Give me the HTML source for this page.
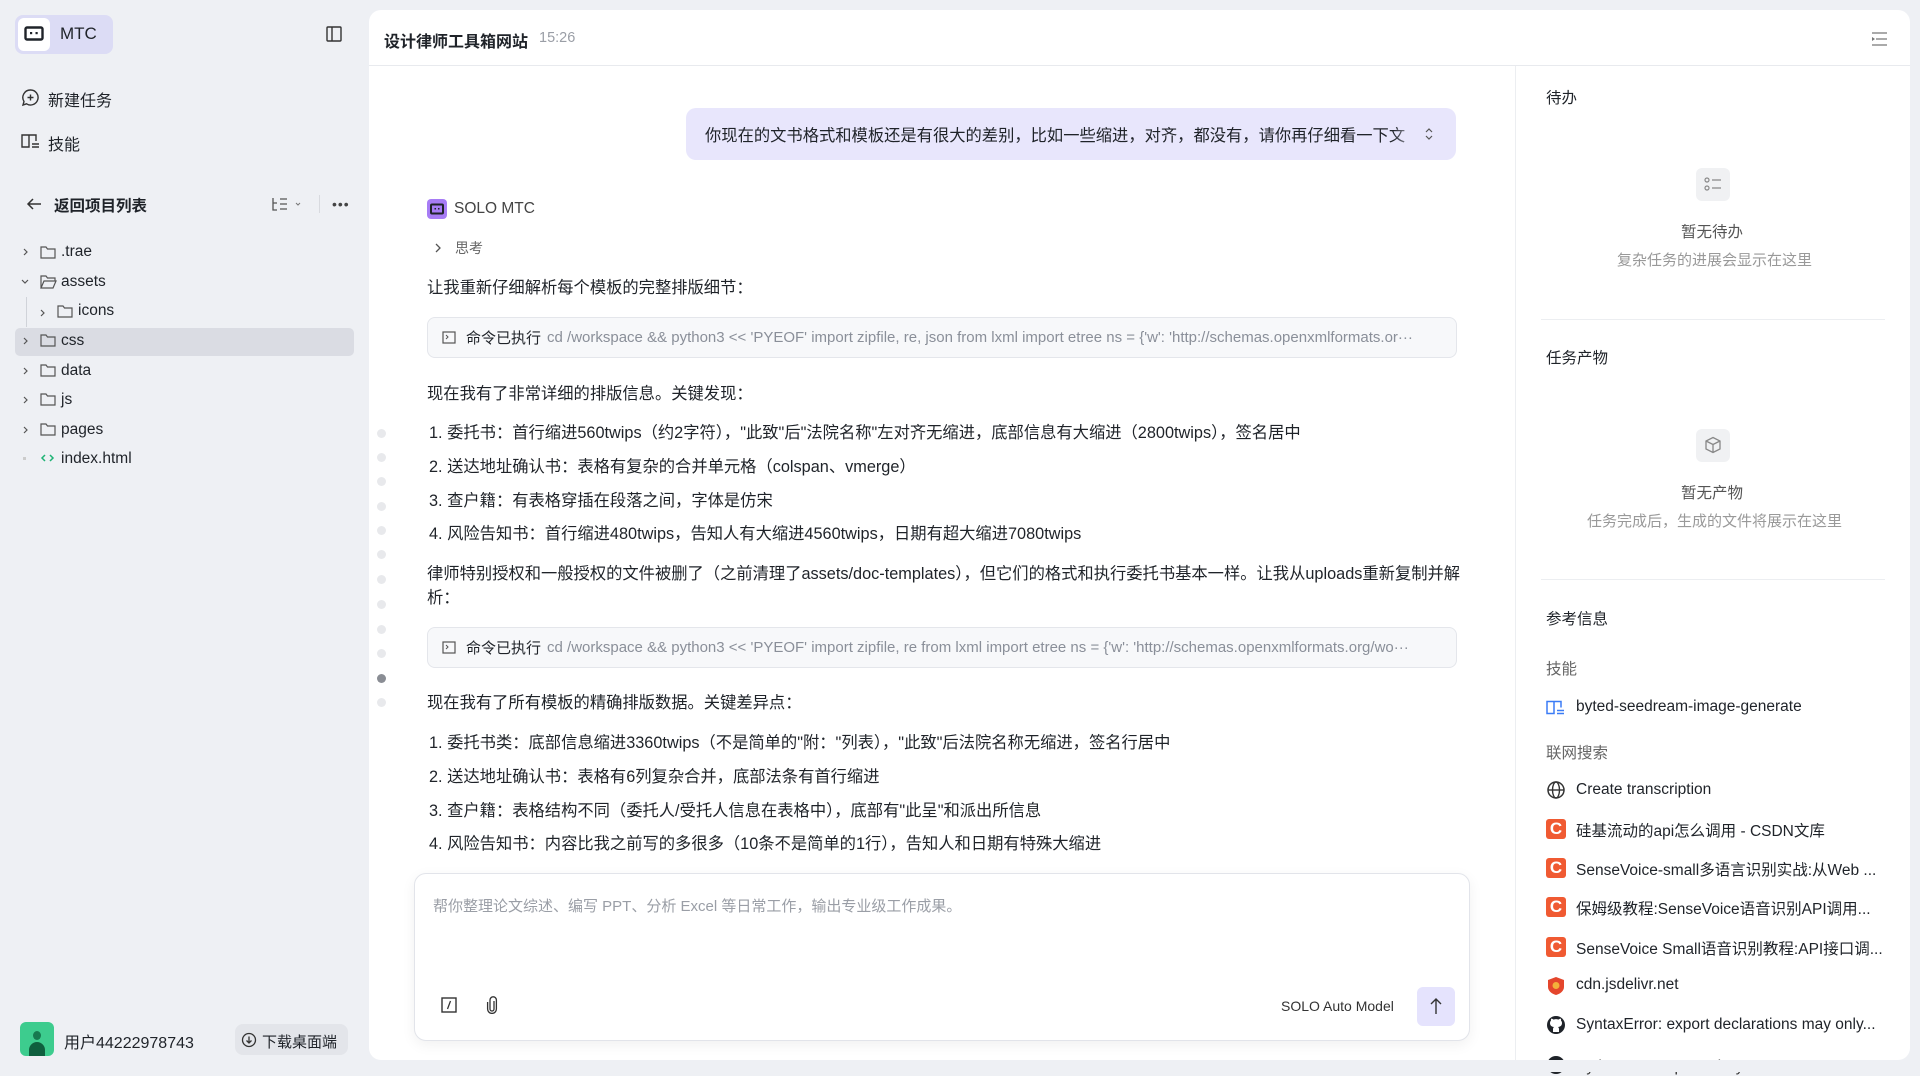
<!DOCTYPE html>
<html><head><meta charset="utf-8"><style>
*{margin:0;padding:0;box-sizing:border-box}
body{width:1920px;height:1072px;background:#eef0f4;font-family:"Liberation Sans","Noto Sans CJK SC",sans-serif;color:#1f2329;position:relative;overflow:hidden}
.a{position:absolute;white-space:nowrap}
.side{font-size:16px}
.main{position:absolute;left:369px;top:10px;width:1541px;height:1050px;background:#fff;border-radius:12px;overflow:hidden}
.t{font-size:16.3px;color:#1f2329}
.cmd{position:absolute;left:58px;width:1030px;height:41px;background:#f7f8fa;border:1px solid #e4e6eb;border-radius:8px;font-size:15px;display:flex;align-items:center;padding-left:14px;overflow:hidden;white-space:nowrap}
.cmd b{font-weight:normal;color:#1f2329;margin:0 6px 0 10px}
.cmd span{color:#8a8f99}
.dot{position:absolute;left:8px;width:9px;height:9px;border-radius:50%;background:#e8e9ec}
.rp .a{font-size:15.5px}
.ic{position:absolute;left:1546px;width:20px;height:20px}
.tl{position:absolute;font-size:15.5px;white-space:nowrap}
</style></head><body>
<!-- sidebar -->
<div class="a" style="left:15px;top:15px;width:98px;height:39px;background:#dcdcf5;border-radius:8px"></div>
<div class="a" style="left:18px;top:18px;width:32px;height:33px;background:#fff;border-radius:6px"></div>
<svg class="a" style="left:24px;top:26px" width="20" height="16" viewBox="0 0 20 16"><rect x="1.5" y="1.5" width="17" height="12" rx="1.5" fill="none" stroke="#1f2329" stroke-width="2.4"/><rect x="6" y="6" width="2.2" height="2.2" fill="#1f2329"/><rect x="11.5" y="6" width="2.2" height="2.2" fill="#1f2329"/></svg>
<div class="a" style="left:60px;top:24px;font-size:17px;font-weight:500">MTC</div>
<svg class="a" style="left:326px;top:26px" width="16" height="16" viewBox="0 0 16 16"><rect x="1" y="1" width="14" height="14" rx="1" fill="none" stroke="#333" stroke-width="1.4"/><line x1="6" y1="1" x2="6" y2="15" stroke="#333" stroke-width="1.4"/></svg>
<svg class="a" style="left:21px;top:88px" width="19" height="19" viewBox="0 0 19 19"><path d="M9.5 2a7.5 7.5 0 1 1-4 13.8L2 17l1-3.5A7.5 7.5 0 0 1 9.5 2z" fill="none" stroke="#333" stroke-width="1.4"/><path d="M9.5 6.5v6M6.5 9.5h6" stroke="#333" stroke-width="1.4"/></svg>
<div class="a side" style="left:48px;top:87px">新建任务</div>
<svg class="a" style="left:21px;top:133px" width="20" height="17" viewBox="0 0 20 17"><path d="M1 2h7v12H1zM8 2h7v6" fill="none" stroke="#333" stroke-width="1.4"/><path d="M11 11h7M11 14h7" stroke="#333" stroke-width="1.4"/></svg>
<div class="a side" style="left:48px;top:131px">技能</div>
<svg class="a" style="left:26px;top:197px" width="16" height="14" viewBox="0 0 16 14"><path d="M15 7H2M7 2L2 7l5 5" fill="none" stroke="#333" stroke-width="1.5"/></svg>
<div class="a" style="left:54px;top:194px;font-size:15.5px;font-weight:bold">返回项目列表</div>
<svg class="a" style="left:271px;top:196px" width="30" height="16" viewBox="0 0 30 16"><path d="M2 2v12h4M2 7h4M9 3h7M9 8h7M9 13h7" fill="none" stroke="#555" stroke-width="1.3"/><path d="M25 7l2 2 2-2" fill="none" stroke="#777" stroke-width="1"/></svg>
<div class="a" style="left:319px;top:195px;width:1px;height:18px;background:#d8dadf"></div>
<div class="a" style="left:332px;top:196px;font-size:14px;color:#444;letter-spacing:1px">•••</div>
<div class="a" style="left:15px;top:328px;width:339px;height:28px;background:#dadce3;border-radius:5px"></div>
<div class="a" style="left:26px;top:297px;width:1px;height:30px;background:#d0d3d9"></div>
<svg class="a" style="left:0;top:240px" width="150" height="235" viewBox="0 0 150 235">
<g fill="none" stroke="#555" stroke-width="1.2">
<path d="M24 9l3 3-3 3"/>
<path d="M22 40l3 3 3-3"/>
<path d="M41 70l3 3-3 3M24 98l3 3-3 3M24 128l3 3-3 3M24 157l3 3-3 3M24 187l3 3-3 3"/>
<path d="M41 7h5l1.5 2H55v9H41z"/>
<path d="M41 36h5l1.5 2H55v3H44l-3 7zM41 48l3-7h12l-3 7z"/>
<path d="M58 66h5l1.5 2H72v9H58z"/>
<path d="M41 95h5l1.5 2H55v9H41z"/>
<path d="M41 125h5l1.5 2H55v9H41z"/>
<path d="M41 154h5l1.5 2H55v9H41z"/>
<path d="M41 184h5l1.5 2H55v9H41z"/>
<path d="M45 215l-3 3 3 3M50 215l3 3-3 3" stroke="#1fb375" stroke-width="1.5"/>
</g><rect x="23" y="217" width="3" height="3" fill="#ccc"/></svg>
<div class="tl" style="left:61px;top:243px">.trae</div>
<div class="tl" style="left:61px;top:273px">assets</div>
<div class="tl" style="left:78px;top:302px">icons</div>
<div class="tl" style="left:61px;top:332px">css</div>
<div class="tl" style="left:61px;top:362px">data</div>
<div class="tl" style="left:61px;top:391px">js</div>
<div class="tl" style="left:61px;top:421px">pages</div>
<div class="tl" style="left:61px;top:450px">index.html</div>
<div class="a" style="left:20px;top:1022px;width:34px;height:34px;background:#3dcc8e;border-radius:6px;overflow:hidden"><div style="position:absolute;left:13px;top:9px;width:8px;height:9px;border-radius:50%;background:#177a50"></div><div style="position:absolute;left:9px;top:20px;width:16px;height:14px;border-radius:8px 8px 0 0;background:#0f5f3e"></div></div>
<div class="a" style="left:64px;top:1029px;font-size:16px">用户44222978743</div>
<div class="a" style="left:235px;top:1024px;width:113px;height:31px;background:#e3e5ea;border-radius:8px"></div>
<svg class="a" style="left:241px;top:1032px" width="16" height="16" viewBox="0 0 16 16"><circle cx="8" cy="8" r="6.5" fill="none" stroke="#333" stroke-width="1.3"/><path d="M8 4.5v6M5.5 8.5L8 11l2.5-2.5" fill="none" stroke="#333" stroke-width="1.3"/></svg>
<div class="a" style="left:262px;top:1031px;font-size:15px">下载桌面端</div>

<!-- main -->
<div class="main">
<div class="a" style="left:15px;top:18px;font-size:16px;font-weight:bold">设计律师工具箱网站</div>
<div class="a" style="left:170px;top:20px;font-size:14.5px;color:#9a9ea6">15:26</div>
<div class="a" style="left:0;top:55px;width:1541px;height:1px;background:#e8eaee"></div>
<svg class="a" style="left:1502px;top:22px" width="16" height="14" viewBox="0 0 16 14"><path d="M1 1h15M5 7h11M1 13h15" stroke="#777" stroke-width="1.3"/><path d="M1 5l3 2-3 2z" fill="#777"/></svg>
<div class="a" style="left:1146px;top:56px;width:1px;height:994px;background:#eceef1"></div>

<div class="dot" style="top:419px"></div><div class="dot" style="top:443px"></div><div class="dot" style="top:467px"></div><div class="dot" style="top:492px"></div><div class="dot" style="top:516px"></div><div class="dot" style="top:540px"></div><div class="dot" style="top:565px"></div><div class="dot" style="top:590px"></div><div class="dot" style="top:615px"></div><div class="dot" style="top:639px"></div><div class="dot" style="top:664px;background:#8a8d94"></div><div class="dot" style="top:688px"></div>

<div class="a" style="left:317px;top:98px;width:770px;height:52px;background:#e8e6fc;border-radius:10px;font-size:16.3px;padding:14px 0 0 19px;overflow:hidden">你现在的文书格式和模板还是有很大的差别，比如一些缩进，对齐，都没有，请你再仔细看一下文</div>
<div class="a" style="left:1024px;top:100px;width:28px;height:48px;background:linear-gradient(90deg,rgba(232,230,252,0),#e8e6fc)"></div>
<div class="a" style="left:1050px;top:100px;width:30px;height:48px;background:#e8e6fc"></div>
<svg class="a" style="left:1055px;top:116px" width="10" height="16" viewBox="0 0 10 16"><path d="M2 6l3-3 3 3M2 10l3 3 3-3" fill="none" stroke="#555" stroke-width="1.2"/></svg>

<div class="a" style="left:58px;top:189px;width:20px;height:20px;background:#a77cf5;border-radius:4px"></div>
<svg class="a" style="left:61px;top:193px" width="14" height="12" viewBox="0 0 14 12"><rect x="1" y="1.5" width="12" height="9" rx="1" fill="none" stroke="#1f2329" stroke-width="2"/><rect x="4.5" y="5" width="1.5" height="1.5" fill="#1f2329"/><rect x="8" y="5" width="1.5" height="1.5" fill="#1f2329"/></svg>
<div class="a" style="left:85px;top:190px;font-size:15.5px;color:#444">SOLO MTC</div>
<svg class="a" style="left:65px;top:232px" width="8" height="12" viewBox="0 0 8 12"><path d="M2 2l4 4-4 4" fill="none" stroke="#555" stroke-width="1.3"/></svg>
<div class="a" style="left:86px;top:228px;font-size:14px;color:#666">思考</div>
<div class="a t" style="left:58px;top:264px">让我重新仔细解析每个模板的完整排版细节：</div>
<div class="cmd" style="top:307px"><svg width="14" height="13" viewBox="0 0 14 13"><rect x="1" y="1" width="12" height="11" fill="none" stroke="#555" stroke-width="1.2"/><path d="M4 4l2 2-2 2" fill="none" stroke="#555" stroke-width="1"/></svg><b>命令已执行</b><span>cd /workspace &amp;&amp; python3 &lt;&lt; 'PYEOF' import zipfile, re, json from lxml import etree ns = {'w': 'http://schemas.openxmlformats.or···</span></div>
<div class="a t" style="left:58px;top:370px">现在我有了非常详细的排版信息。关键发现：</div>
<div class="a t" style="left:60px;top:409px">1. 委托书：首行缩进560twips（约2字符），"此致"后"法院名称"左对齐无缩进，底部信息有大缩进（2800twips），签名居中</div>
<div class="a t" style="left:60px;top:443px">2. 送达地址确认书：表格有复杂的合并单元格（colspan、vmerge）</div>
<div class="a t" style="left:60px;top:477px">3. 查户籍：有表格穿插在段落之间，字体是仿宋</div>
<div class="a t" style="left:60px;top:510px">4. 风险告知书：首行缩进480twips，告知人有大缩进4560twips，日期有超大缩进7080twips</div>
<div class="a t" style="left:58px;top:550px">律师特别授权和一般授权的文件被删了（之前清理了assets/doc-templates），但它们的格式和执行委托书基本一样。让我从uploads重新复制并解</div>
<div class="a t" style="left:58px;top:574px">析：</div>
<div class="cmd" style="top:617px"><svg width="14" height="13" viewBox="0 0 14 13"><rect x="1" y="1" width="12" height="11" fill="none" stroke="#555" stroke-width="1.2"/><path d="M4 4l2 2-2 2" fill="none" stroke="#555" stroke-width="1"/></svg><b>命令已执行</b><span>cd /workspace &amp;&amp; python3 &lt;&lt; 'PYEOF' import zipfile, re from lxml import etree ns = {'w': 'http://schemas.openxmlformats.org/wo···</span></div>
<div class="a t" style="left:58px;top:679px">现在我有了所有模板的精确排版数据。关键差异点：</div>
<div class="a t" style="left:60px;top:719px">1. 委托书类：底部信息缩进3360twips（不是简单的"附："列表），"此致"后法院名称无缩进，签名行居中</div>
<div class="a t" style="left:60px;top:753px">2. 送达地址确认书：表格有6列复杂合并，底部法条有首行缩进</div>
<div class="a t" style="left:60px;top:787px">3. 查户籍：表格结构不同（委托人/受托人信息在表格中），底部有"此呈"和派出所信息</div>
<div class="a t" style="left:60px;top:820px">4. 风险告知书：内容比我之前写的多很多（10条不是简单的1行），告知人和日期有特殊大缩进</div>

<div class="a" style="left:45px;top:863px;width:1056px;height:168px;background:#fff;border:1px solid #e2e4ea;border-radius:12px;box-shadow:0 4px 14px rgba(0,0,0,0.06)"></div>
<div class="a" style="left:64px;top:885px;font-size:15px;color:#9a9ea6">帮你整理论文综述、编写 PPT、分析 Excel 等日常工作，输出专业级工作成果。</div>
<svg class="a" style="left:72px;top:987px" width="16" height="16" viewBox="0 0 16 16"><rect x="1" y="1" width="14" height="14" fill="none" stroke="#333" stroke-width="1.4"/><path d="M9.5 4l-3 8" stroke="#333" stroke-width="1.3"/></svg>
<svg class="a" style="left:117px;top:986px" width="12" height="18" viewBox="0 0 12 18"><path d="M8 5v8a2 2 0 0 1-4 0V4a3.2 3.2 0 0 1 6.4 0v9a4.4 4.4 0 0 1-8.8 0V6" fill="none" stroke="#333" stroke-width="1.3"/></svg>
<div class="a" style="left:912px;top:988px;font-size:14px;color:#333">SOLO Auto Model</div>
<div class="a" style="left:1048px;top:977px;width:38px;height:39px;background:#e5e3fd;border-radius:6px"></div>
<svg class="a" style="left:1059px;top:987px" width="16" height="18" viewBox="0 0 16 18"><path d="M8 17V2M3 7l5-5 5 5" fill="none" stroke="#333" stroke-width="1.4"/></svg>
</div>

<!-- right panel -->
<div class="rp">
<div class="a" style="left:1546px;top:86px">待办</div>
<div class="a" style="left:1696px;top:168px;width:34px;height:33px;background:#f0f1f3;border-radius:6px"></div>
<svg class="a" style="left:1703px;top:176px" width="20" height="16" viewBox="0 0 20 16"><circle cx="4" cy="4" r="2" fill="none" stroke="#888" stroke-width="1.2"/><circle cx="4" cy="12" r="2" fill="none" stroke="#888" stroke-width="1.2"/><path d="M9 4h9M9 12h9" stroke="#888" stroke-width="1.2"/></svg>
<div class="a" style="left:1681px;top:220px;color:#555">暂无待办</div>
<div class="a" style="left:1617px;top:249px;color:#999;font-size:15px">复杂任务的进展会显示在这里</div>
<div class="a" style="left:1541px;top:319px;width:344px;height:1px;background:#eceef1"></div>
<div class="a" style="left:1546px;top:346px">任务产物</div>
<div class="a" style="left:1696px;top:429px;width:34px;height:33px;background:#f0f1f3;border-radius:6px"></div>
<svg class="a" style="left:1704px;top:436px" width="18" height="18" viewBox="0 0 18 18"><path d="M9 1.5l7 3.5v8l-7 3.5-7-3.5V5zM2 5l7 3.5 7-3.5M9 8.5v8" fill="none" stroke="#888" stroke-width="1.3"/></svg>
<div class="a" style="left:1681px;top:481px;color:#555">暂无产物</div>
<div class="a" style="left:1587px;top:510px;color:#999;font-size:15px">任务完成后，生成的文件将展示在这里</div>
<div class="a" style="left:1541px;top:579px;width:344px;height:1px;background:#eceef1"></div>
<div class="a" style="left:1546px;top:607px">参考信息</div>
<div class="a" style="left:1546px;top:657px;color:#666">技能</div>
<svg class="ic" style="top:698px" viewBox="0 0 20 17"><path d="M1 2h7v12H1zM8 2h7v6" fill="none" stroke="#3b7cf6" stroke-width="1.5"/><path d="M11 11h7M11 14h7" stroke="#3b7cf6" stroke-width="1.5"/></svg>
<div class="a" style="left:1576px;top:698px">byted-seedream-image-generate</div>
<div class="a" style="left:1546px;top:741px;color:#666">联网搜索</div>
<svg class="ic" style="top:780px" viewBox="0 0 20 20"><circle cx="10" cy="10" r="8" fill="none" stroke="#333" stroke-width="1.5"/><ellipse cx="10" cy="10" rx="3.5" ry="8" fill="none" stroke="#333" stroke-width="1.4"/><path d="M2 10h16" stroke="#333" stroke-width="1.4"/></svg>
<div class="a" style="left:1576px;top:781px">Create transcription</div>
<div class="ic" style="top:819px;background:#f05a32;border-radius:3px;color:#fff;font-size:17px;font-weight:bold;line-height:20px;text-align:center">C</div>
<div class="a" style="left:1576px;top:819px">硅基流动的api怎么调用 - CSDN文库</div>
<div class="ic" style="top:858px;background:#f05a32;border-radius:3px;color:#fff;font-size:17px;font-weight:bold;line-height:20px;text-align:center">C</div>
<div class="a" style="left:1576px;top:858px">SenseVoice-small多语言识别实战:从Web ...</div>
<div class="ic" style="top:897px;background:#f05a32;border-radius:3px;color:#fff;font-size:17px;font-weight:bold;line-height:20px;text-align:center">C</div>
<div class="a" style="left:1576px;top:897px">保姆级教程:SenseVoice语音识别API调用...</div>
<div class="ic" style="top:937px;background:#f05a32;border-radius:3px;color:#fff;font-size:17px;font-weight:bold;line-height:20px;text-align:center">C</div>
<div class="a" style="left:1576px;top:937px">SenseVoice Small语音识别教程:API接口调...</div>
<svg class="ic" style="top:976px" viewBox="0 0 20 20"><path d="M10 1l8 3v7c0 4-4 7-8 8-4-1-8-4-8-8V4z" fill="#e4462c"/><circle cx="10" cy="9.5" r="3.5" fill="#f3b13a"/></svg>
<div class="a" style="left:1576px;top:976px">cdn.jsdelivr.net</div>
<svg class="ic" style="top:1015px" viewBox="0 0 20 20"><circle cx="10" cy="10" r="9" fill="#1f2329"/><path d="M7 17v-3c0-1 .5-1.5 1-2-2.5-.3-4-1.5-4-4 0-1 .4-1.8 1-2.4-.1-.6-.1-1.4.2-2 1 0 1.8.5 2.4 1a7 7 0 0 1 4.8 0c.6-.5 1.4-1 2.4-1 .3.6.3 1.4.2 2 .6.6 1 1.4 1 2.4 0 2.5-1.5 3.7-4 4 .5.5 1 1 1 2v3z" fill="#fff"/></svg>
<div class="a" style="left:1576px;top:1016px">SyntaxError: export declarations may only...</div>
<svg class="ic" style="top:1055px" viewBox="0 0 20 20"><circle cx="10" cy="10" r="9" fill="#1f2329"/></svg>
<div class="a" style="left:1576px;top:1058px;color:#333">Python: "Unexpected Syntax Error"</div>
</div>
<div class="a" style="left:0;top:1060px;width:1920px;height:12px;background:#eef0f4"></div>
</body></html>
